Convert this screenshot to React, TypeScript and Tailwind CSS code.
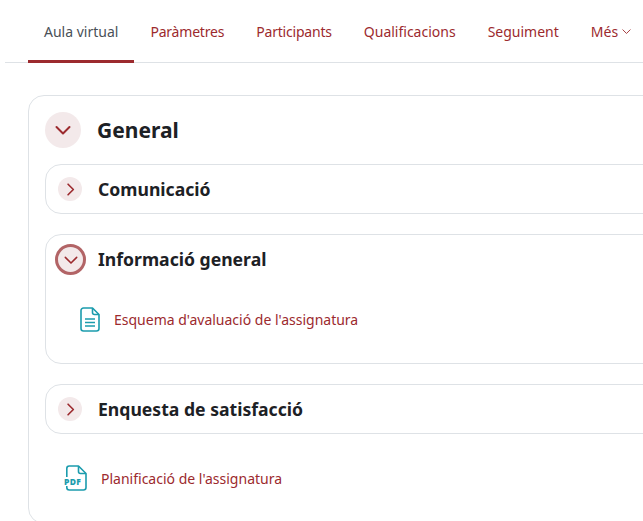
import React from 'react';

const RED = 'text-[#9c2a2e]';

const Chevron: React.FC<{ dir: 'down' | 'right'; size: number; width?: number }> = ({ dir, size, width = 2 }) => (
  <svg width={size} height={size} viewBox="0 0 16 16" fill="none" stroke="currentColor" strokeWidth={width} strokeLinecap="round" strokeLinejoin="round">
    {dir === 'down' ? <path d="M1.5 5 8 11.5 14.500 5" /> : <path d="M5 1.500 11.500 8 5 14.500" />}
  </svg>
);

const DocIcon = () => (
  <svg width="20" height="25" viewBox="0 0 20 25" fill="none" stroke="#1b9cad" strokeWidth="1.6" strokeLinejoin="round">
    <path d="M3.500 1h9l6.500 6.500V21.500a2.500 2.500 0 0 1-2.500 2.500h-13A2.500 2.500 0 0 1 1 21.500v-18A2.500 2.500 0 0 1 3.500 1Z" />
    <path d="M12.500 1v4.500a2 2 0 0 0 2 2H19" />
    <path d="M5 12h10M5 15.500h10M5 19h10" />
  </svg>
);

const PdfIcon = () => (
  <svg width="23" height="26" viewBox="0 0 23 26" fill="none">
    <path d="M2.800 12V3.500A2.500 2.500 0 0 1 5.300 1h9.200l7.500 7.500v14a2.500 2.500 0 0 1-2.500 2.500H5.300a2.500 2.500 0 0 1-2.500-2.500V21" stroke="#1b9cad" strokeWidth="1.600" strokeLinejoin="round" />
    <path d="M14.500 1v5.500a2 2 0 0 0 2 2H22" stroke="#1b9cad" strokeWidth="1.600" strokeLinejoin="round" />
    <text x="0" y="20" fontSize="8.500" fontWeight="800" letterSpacing="0.3" fill="#1b9cad" fontFamily="'Open Sans', sans-serif">PDF</text>
  </svg>
);

const SubSection: React.FC<{ title: string }> = ({ title }) => (
  <div className="flex h-[50px] items-center rounded-2xl border border-[#dee2e6] pl-3">
    <span className={`flex h-6 w-6 items-center justify-center rounded-full bg-[#f3e9ea] ${RED}`}>
      <Chevron dir="right" size={13} />
    </span>
    <h3 className="ml-4 text-[17.6px] font-bold text-[#1d2125]">{title}</h3>
  </div>
);

const App: React.FC = () => {
  return (
    <div className="h-[521px] w-[643px] overflow-hidden bg-white font-['Noto_Sans',sans-serif] text-[14px]">
      {/* Nav */}
      <nav className="ml-[5px] flex h-[63px] items-stretch whitespace-nowrap border-b border-[#dee2e6] pl-[23px]">
        <div className="-mb-px flex items-center border-b-[3px] border-[#9c2a2e] px-4 pt-[3px] text-[#495057]">Aula virtual</div>
        <div className={`flex items-center px-4 tracking-[-0.2px] ${RED}`}>Paràmetres</div>
        <div className={`flex items-center px-4 tracking-[-0.2px] ${RED}`}>Participants</div>
        <div className={`flex items-center px-4 ${RED}`}>Qualificacions</div>
        <div className={`flex items-center px-4 ${RED}`}>Seguiment</div>
        <div className={`flex items-center gap-1 px-4 ${RED}`}>
          Més
          <Chevron dir="down" size={9} width={1.6} />
        </div>
      </nav>

      {/* Course content */}
      <main className="pl-[28px] pt-[32px]">
        <section className="h-[429px] w-[700px] rounded-2xl border border-[#dee2e6] pl-4 pt-4">
          <div className="flex items-center">
            <span className={`flex h-9 w-9 items-center justify-center rounded-full bg-[#f3e9ea] ${RED}`}>
              <Chevron dir="down" size={16} />
            </span>
            <h2 className="ml-4 pt-[2px] text-[21px] font-bold text-[#1d2125]">General</h2>
          </div>

          <div className="mt-4">
            <SubSection title="Comunicació" />

            <div className="mt-5 h-[130px] rounded-2xl border border-[#dee2e6] pl-[9px] pt-[9px]">
              <div className="flex items-center">
                <span className={`flex h-[31px] w-[31px] items-center justify-center rounded-full border-[3px] border-[#b26466] bg-[#f3e9ea] ${RED}`}>
                  <Chevron dir="down" size={14} width={1.8} />
                </span>
                <h3 className="ml-3 text-[17.6px] font-bold text-[#1d2125]">Informació general</h3>
              </div>
              <div className="ml-[25px] mt-[32px] flex items-center">
                <DocIcon />
                <a className={`ml-[14px] ${RED}`}>Esquema d'avaluació de l'assignatura</a>
              </div>
            </div>

            <div className="mt-5">
              <SubSection title="Enquesta de satisfacció" />
            </div>

            <div className="ml-[19px] mt-[31px] flex items-center">
              <PdfIcon />
              <a className={`ml-[14px] ${RED}`}>Planificació de l'assignatura</a>
            </div>
          </div>
        </section>
      </main>
    </div>
  );
};

export default App;
